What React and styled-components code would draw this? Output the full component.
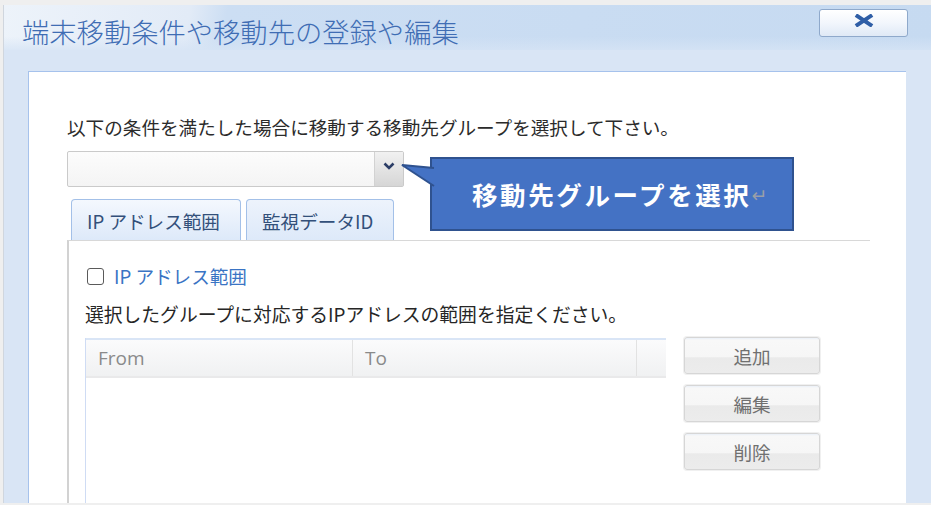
import React from 'react';
import styled, { createGlobalStyle } from 'styled-components';

const JP = `"Noto Sans CJK JP", "Noto Sans", sans-serif`;

const GlobalStyle = createGlobalStyle`
  html, body {
    margin: 0;
    padding: 0;
    background: #efefef;
    font-family: ${JP};
  }
`;

export default function App() {
  return (
    <>
      <GlobalStyle />
      <Page>
        <Window>
          <TitleBar>
            <Title>端末移動条件や移動先の登録や編集</Title>
            <CloseButton>
              <svg width="24" height="13" viewBox="0 0 24 13">
                <path d="M5.5 2.2 L18.5 10.8 M18.5 2.2 L5.5 10.8" stroke="#2f5ea6" strokeWidth="4" strokeLinecap="square" />
              </svg>
            </CloseButton>
          </TitleBar>
          <Body>
            <Panel>
              <Instruction>以下の条件を満たした場合に移動する移動先グループを選択して下さい。</Instruction>
              <SelectRow>
                <Select>
                  <SelectField />
                  <DropButton>
                    <svg width="12" height="8" viewBox="0 0 12 8">
                      <path d="M1.5 1.5 L6 6 L10.5 1.5" stroke="#2b3d66" strokeWidth="2.6" fill="none" />
                    </svg>
                  </DropButton>
                </Select>
                <Callout>
                  <Tail width="34" height="32" viewBox="0 0 34 32">
                    <path d="M34 11 L2 8 L34 29" fill="#4472c4" stroke="#2f528f" strokeWidth="2" />
                  </Tail>
                  <CalloutText>移動先グループを選択</CalloutText>
                  <ReturnMark>↵</ReturnMark>
                </Callout>
              </SelectRow>
              <Tabs>
                <Tab $active>IP アドレス範囲</Tab>
                <Tab>監視データID</Tab>
              </Tabs>
              <TabPanel>
                <CheckRow>
                  <CheckBox />
                  <CheckLabel>IP アドレス範囲</CheckLabel>
                </CheckRow>
                <Description>選択したグループに対応するIPアドレスの範囲を指定ください。</Description>
                <TableRow>
                  <Table>
                    <HeaderRow>
                      <HeaderCell $w={267}>From</HeaderCell>
                      <HeaderCell $w={284}>To</HeaderCell>
                      <HeaderCell $w={29} $last />
                    </HeaderRow>
                    <TableBody />
                  </Table>
                  <Buttons>
                    <ActionButton>追加</ActionButton>
                    <ActionButton>編集</ActionButton>
                    <ActionButton>削除</ActionButton>
                  </Buttons>
                </TableRow>
              </TabPanel>
            </Panel>
          </Body>
        </Window>
      </Page>
    </>
  );
}

const Page = styled.div`
  box-sizing: border-box;
  width: 931px;
  height: 505px;
  padding: 5px 0 2px 3px;
  overflow: hidden;
`;

const Window = styled.div`
  height: 100%;
  background: #d9e5f5;
  border-left: 1px solid #d0d6de;
  display: flex;
  flex-direction: column;
`;

const TitleBar = styled.div`
  height: 45px;
  flex: none;
  display: flex;
  justify-content: space-between;
  align-items: flex-start;
  padding: 0 23px 0 18px;
  background:
    linear-gradient(to bottom, rgba(255,255,255,0) 70%, rgba(214,228,245,0.8) 100%),
    linear-gradient(100deg, #edf3fa 0%, #e2ebf7 20%, #ccdef3 24%, #c6daf1 100%);
`;

const Title = styled.div`
  font-size: 27.3px;
  font-weight: 300;
  line-height: 32px;
  margin-top: 10px;
  color: #3f6db4;
  white-space: nowrap;
`;

const CloseButton = styled.div`
  box-sizing: border-box;
  width: 89px;
  height: 28px;
  margin-top: 4px;
  display: flex;
  align-items: center;
  justify-content: center;
  padding-bottom: 5px;
  border: 1px solid #8fa9cb;
  border-radius: 3px;
  background: linear-gradient(to bottom, #ffffff 0%, #f2f6fc 50%, #dfe9f6 100%);
  box-shadow: 0 1px 1px rgba(255,255,255,0.8) inset;

  svg {
    flex: none;
  }
`;

const Body = styled.div`
  flex: 1;
  min-height: 0;
  display: flex;
  padding: 21px 25px 0 24px;
`;

const Panel = styled.div`
  flex: 1;
  background: #ffffff;
  border-left: 1px solid #a6c2ec;
  border-top: 1px solid #a6c2ec;
  padding: 41px 0 0 38px;
  display: flex;
  flex-direction: column;
  overflow: hidden;
`;

const Instruction = styled.div`
  font-size: 18.6px;
  line-height: 27px;
  color: #2b2b2b;
  white-space: nowrap;
`;

const SelectRow = styled.div`
  position: relative;
  margin-top: 11px;
  display: flex;
`;

const Select = styled.div`
  box-sizing: border-box;
  width: 337px;
  height: 36px;
  display: flex;
  border: 1px solid #cacaca;
  border-radius: 2px;
  background: linear-gradient(to bottom, #fcfcfc, #f4f4f4);
`;

const SelectField = styled.div`
  flex: 1;
`;

const DropButton = styled.div`
  width: 29px;
  display: flex;
  align-items: center;
  justify-content: center;
  padding-bottom: 6px;
  box-sizing: border-box;
  border-left: 1px solid #d2d2d2;
  background: linear-gradient(to bottom, #f1f1f1, #d6d6d6);
`;

const Callout = styled.div`
  position: absolute;
  left: 363px;
  top: 6px;
  box-sizing: border-box;
  width: 364px;
  height: 74px;
  background: #4472c4;
  border: 2px solid #2f528f;
  display: flex;
  align-items: center;
  padding: 0 0 2px 40px;
  z-index: 2;
`;

const Tail = styled.svg`
  position: absolute;
  left: -32px;
  top: -2px;
  overflow: visible;
`;

const CalloutText = styled.span`
  color: #ffffff;
  font-size: 25.5px;
  font-weight: 700;
  letter-spacing: 2.6px;
  white-space: nowrap;
`;

const ReturnMark = styled.span`
  color: #9a9fa8;
  font-family: "DejaVu Sans", sans-serif;
  font-size: 19px;
  margin-top: 4px;
`;

const Tabs = styled.div`
  display: flex;
  gap: 5px;
  margin-top: 12px;
  padding-left: 4px;
`;

const Tab = styled.div`
  box-sizing: border-box;
  height: 41px;
  padding: 0 15px;
  display: flex;
  align-items: center;
  font-size: 18.6px;
  color: #33507a;
  white-space: nowrap;
  border: 1px solid #a3c0e8;
  border-bottom: none;
  border-radius: 4px 4px 0 0;
  background: linear-gradient(to bottom, ${p => (p.$active ? '#f4f8fe' : '#edf3fc')} 0%, #dde9f9 100%);
  min-width: ${p => (p.$active ? '170px' : '148px')};
`;

const TabPanel = styled.div`
  flex: 1;
  width: 803px;
  box-sizing: border-box;
  border-top: 1px solid #d8d8d8;
  border-left: 2px solid #d2d2d2;
  padding: 21px 0 0 16px;
  display: flex;
  flex-direction: column;
`;

const CheckRow = styled.div`
  display: flex;
  align-items: center;
  height: 27px;
  padding-left: 2px;
`;

const CheckBox = styled.div`
  box-sizing: border-box;
  width: 17px;
  height: 17px;
  border: 1.6px solid #5a5a5a;
  border-radius: 3px;
  margin-right: 10px;
  margin-top: 1px;
`;

const CheckLabel = styled.span`
  font-size: 18.6px;
  color: #3a74c4;
  white-space: nowrap;
`;

const Description = styled.div`
  margin-top: 11px;
  font-size: 18.8px;
  line-height: 27px;
  color: #262626;
  white-space: nowrap;
`;

const TableRow = styled.div`
  flex: 1;
  margin-top: 11px;
  display: flex;
  gap: 18px;
  align-items: flex-start;
`;

const Table = styled.div`
  width: 580px;
  height: 200px;
  display: flex;
  flex-direction: column;
  border-left: 1px solid #cfdcf4;
`;

const HeaderRow = styled.div`
  box-sizing: border-box;
  height: 40px;
  display: flex;
  border-top: 2px solid #d9e5f6;
  border-bottom: 2px solid #e9e9ea;
  background: linear-gradient(to bottom, #fbfbfc, #f0f1f2);
`;

const HeaderCell = styled.div`
  box-sizing: border-box;
  width: ${p => p.$w}px;
  display: flex;
  align-items: center;
  padding-left: 12px;
  font-family: "Open Sans", "Noto Sans", sans-serif;
  font-size: 19px;
  color: #8a8a8a;
  border-right: ${p => (p.$last ? 'none' : '1px solid #e2e2e2')};
`;

const TableBody = styled.div`
  flex: 1;
  background: #ffffff;
`;

const Buttons = styled.div`
  display: flex;
  flex-direction: column;
  gap: 11px;
  margin-top: -1px;
`;

const ActionButton = styled.div`
  box-sizing: border-box;
  width: 136px;
  height: 37px;
  display: flex;
  align-items: center;
  justify-content: center;
  font-size: 18.6px;
  color: #707070;
  border: 1px solid #d6d6d6;
  border-radius: 3px;
  background: linear-gradient(to bottom, #eaf0f8 0px, #f8f8f8 2px, #f6f6f6 55%, #eaeaea 56%, #ececec 100%);
  box-shadow: 0 0 0 1px #f0f0f0;
`;
